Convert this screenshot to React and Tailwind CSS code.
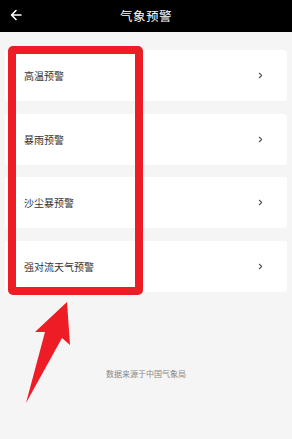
import { ChevronRight } from 'lucide-react';

const items = ['高温预警', '暴雨预警', '沙尘暴预警', '强对流天气预警'];

export default function App() {
  return (
    <div
      className="relative w-[292px] h-[439px] bg-[#f5f5f5] overflow-hidden"
      style={{ fontFamily: '"Noto Sans CJK SC", "Noto Sans", sans-serif' }}
    >
      {/* header */}
      <div className="relative h-8 bg-black flex items-center justify-center">
        <svg className="absolute left-[9px] top-[8px]" width="14" height="14" viewBox="0 0 14 14" fill="none">
          <path d="M12 7H2.5M7 2.5L2.5 7L7 11.5" stroke="#fff" strokeWidth="1.6" strokeLinecap="round" strokeLinejoin="round" />
        </svg>
        <span className="text-white text-[12.5px] leading-none tracking-[0.5px]">气象预警</span>
      </div>

      {/* list */}
      <div className="flex flex-col gap-[12.5px] px-[5px] pt-[18px]">
        {items.map((t) => (
          <div key={t} className="h-[51px] bg-white rounded-[3px] flex items-center justify-between pl-[19px] pr-[22px]">
            <span className="text-[10px] text-[#333]">{t}</span>
            <ChevronRight size={9} strokeWidth={3} className="text-[#555]" />
          </div>
        ))}
      </div>

      <p className="mt-[78px] text-center text-[8px] text-[#888] leading-none">数据来源于中国气象局</p>

      {/* annotation overlay */}
      <div className="absolute left-[8px] top-[46px] w-[135px] h-[249px] border-[8px] border-[#ee1c25] rounded-[5px]" />
      <svg className="absolute left-0 top-[295px]" width="90" height="115" viewBox="0 295 90 115">
        <polygon points="67,302 70,345 62,338 26,403 45,332 35,332" fill="#ee1c25" />
      </svg>
    </div>
  );
}
